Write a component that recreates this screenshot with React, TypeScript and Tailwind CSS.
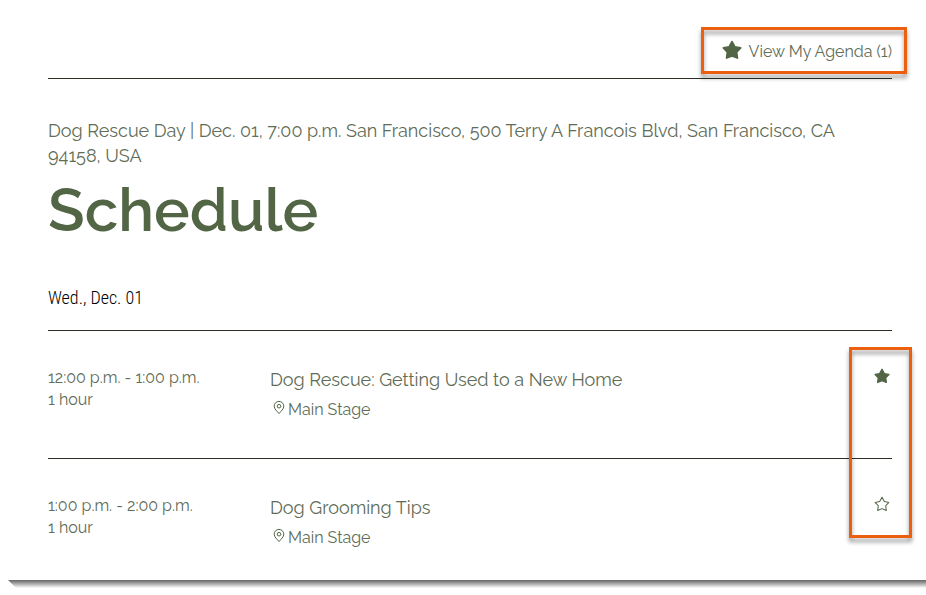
import { useState } from 'react';

const SESSIONS = [
  {
    id: 'new-home',
    time: '12:00 p.m. - 1:00 p.m.',
    duration: '1 hour',
    title: 'Dog Rescue: Getting Used to a New Home',
    stage: 'Main Stage',
  },
  {
    id: 'grooming',
    time: '1:00 p.m. - 2:00 p.m.',
    duration: '1 hour',
    title: 'Dog Grooming Tips',
    stage: 'Main Stage',
  },
];

function StarIcon({ filled, className }: { filled: boolean; className: string }) {
  return (
    <svg
      viewBox="0 0 20 20"
      className={`text-[#526646] ${className}`}
      fill={filled ? 'currentColor' : 'none'}
      stroke="currentColor"
      strokeWidth={filled ? 1.8 : 1.3}
      strokeLinejoin="round"
      aria-hidden="true"
    >
      <path d="M10 1.6 12.9 7 18.6 8 14.6 12.2 15.4 18 10 15.8 4.6 18 5.4 12.2 1.4 8 7.1 7Z" />
    </svg>
  );
}

function PinIcon() {
  return (
    <svg viewBox="0 0 12 14" className="w-3 h-3.5 text-[#526646]" fill="none" stroke="currentColor" aria-hidden="true">
      <path d="M6 12.5C4 10.3 1.2 8 1.2 5.2a4.8 4.8 0 0 1 9.6 0C10.8 8 8 10.3 6 12.5Z" />
      <circle cx="6" cy="5.2" r="1.8" />
    </svg>
  );
}

// Orange frame that points at a control
function Callout({ className }: { className: string }) {
  return (
    <div
      className={`absolute pointer-events-none border-3 border-[#eb5f0e] drop-shadow-[0_4px_2px_rgba(0,0,0,0.4)] ${className}`}
    />
  );
}

export default function App() {
  const [saved, setSaved] = useState<string[]>(['new-home']);

  const toggle = (id: string) =>
    setSaved((prev) => (prev.includes(id) ? prev.filter((s) => s !== id) : [...prev, id]));

  return (
    <div className="bg-white text-[#5f6c56] font-normal font-['Raleway','Lato',sans-serif]">
      <main className="pl-12 pr-[34px]">
        {/* Agenda link */}
        <header className="flex justify-end pt-10 pb-3.5 border-b border-[#2b3024]">
          <div className="relative">
            <button type="button" className="flex items-start gap-[7px] text-base leading-6">
              <StarIcon filled className="w-5 h-5" />
              View My Agenda ({saved.length})
            </button>
            <Callout className="-top-[13px] -bottom-2.5 -left-[21px] -right-[15px]" />
          </div>
        </header>

        {/* Event */}
        <p className="pt-[39px] pr-8 text-lg leading-[25px]">
          Dog Rescue Day | Dec. 01, 7:00 p.m. San Francisco, 500 Terry A Francois Blvd, San Francisco, CA 94158, USA
        </p>
        <h1 className="pt-1.5 text-6xl leading-[72px] font-semibold text-[#526646]">Schedule</h1>

        <h2 className="pt-10 pb-5 text-lg leading-6 font-light text-black font-['Roboto_Condensed','Liberation_Sans_Narrow',sans-serif]">
          Wed., Dec. 01
        </h2>

        {/* Sessions */}
        <div className="relative">
          <ul>
            {SESSIONS.map((s) => {
              const isSaved = saved.includes(s.id);
              return (
                <li key={s.id} className="flex items-start h-32 pt-9 border-t border-[#2b3024]">
                  <div className="w-[222px] shrink-0 text-base leading-[22px]">
                    <p>{s.time}</p>
                    <p>{s.duration}</p>
                  </div>
                  <div className="flex-1">
                    <h3 className="text-lg leading-[26px]">{s.title}</h3>
                    <p className="flex items-start gap-[3px] pl-[3px] pt-[5px] text-base leading-6">
                      <span className="pt-[3px]">
                        <PinIcon />
                      </span>
                      {s.stage}
                    </p>
                  </div>
                  <button
                    type="button"
                    aria-pressed={isSaved}
                    aria-label={`Save ${s.title}`}
                    className="mr-0.5 pt-px"
                    onClick={() => toggle(s.id)}
                  >
                    <StarIcon filled={isSaved} className="w-4 h-4" />
                  </button>
                </li>
              );
            })}
          </ul>
          <Callout className="top-[17px] -right-5 w-[63px] h-[191px]" />
        </div>
      </main>

      {/* Page edge */}
      <div className="h-2 -mt-1.5 ml-2 bg-linear-to-b from-[#666666] to-white [clip-path:polygon(0_0,100%_0,100%_100%,8px_100%)]" />
    </div>
  );
}
